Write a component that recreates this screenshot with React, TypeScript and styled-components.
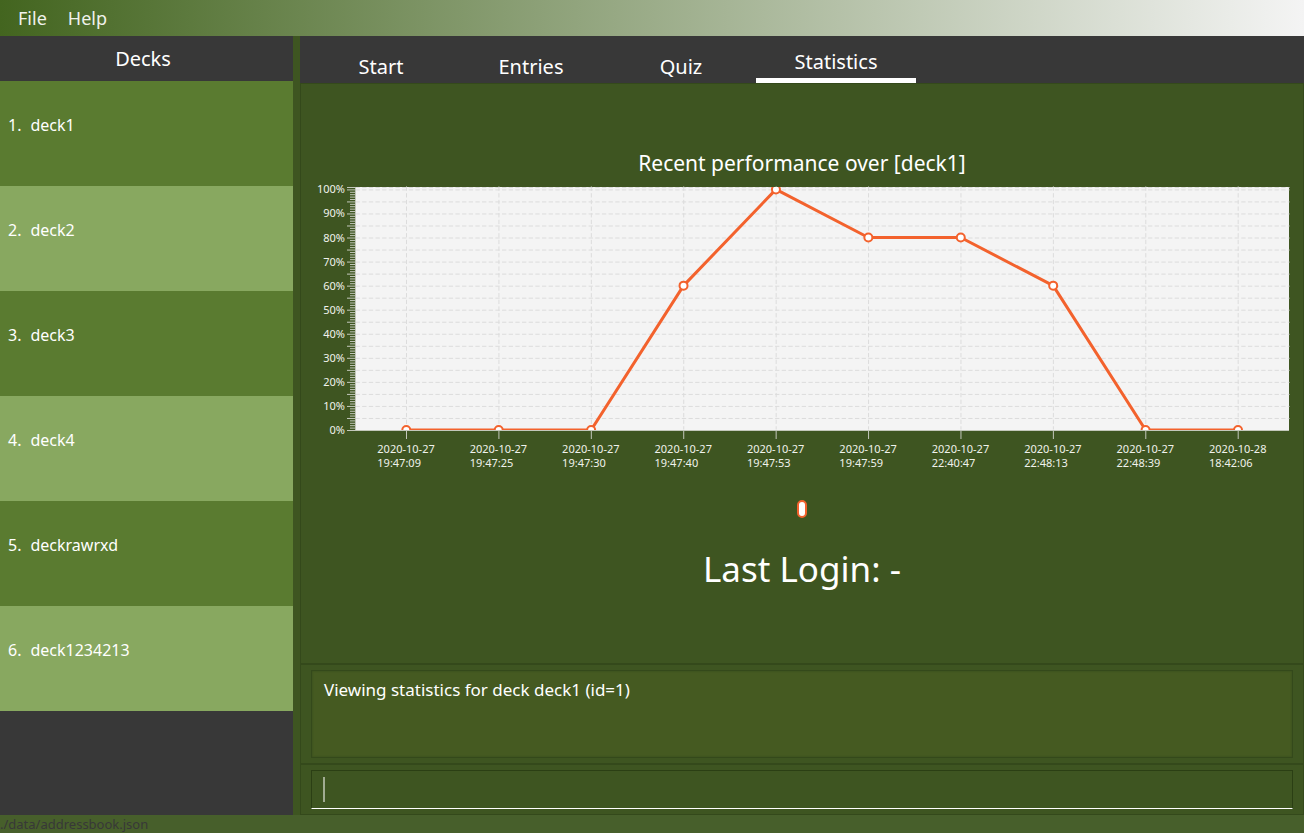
import React, { useLayoutEffect, useRef, useState } from "react";
import styled, { createGlobalStyle } from "styled-components";

const color = {
  base: "#3e5521",
  dark: "#383838",
  rowOdd: "#5a7b30",
  rowEven: "#88a860",
  edge: "#34491b",
  result: "#455a21",
  status: "#475f2b",
  line: "#f3622d",
};

const GlobalStyle = createGlobalStyle`
  *, *::before, *::after { box-sizing: border-box; }
  body {
    margin: 0;
    background: ${color.base};
    color: #fff;
    font-family: "Noto Sans", sans-serif;
  }
  button, input, textarea {
    font-family: inherit;
    color: inherit;
    background: none;
    border: 0;
    border-radius: 0;
    margin: 0;
    padding: 0;
    outline: none;
  }
`;

const Window = styled.div`
  display: flex;
  flex-direction: column;
  min-height: 100vh;
`;

const MenuBar = styled.nav`
  display: flex;
  gap: 21px;
  height: 36px;
  padding: 0 18px;
  background: linear-gradient(to right, #43651f, #f4f4f4);
`;

const MenuButton = styled.button`
  font-size: 18px;
  line-height: 36px;
  color: #f0f2ec;
`;

const Body = styled.div`
  display: flex;
  flex: 1;
  gap: 7px;
`;

const Sidebar = styled.aside`
  flex: 0 0 293px;
  background: ${color.dark};
`;

const SidebarTitle = styled.h2`
  margin: 0;
  padding-right: 7px;
  font-size: 20px;
  font-weight: 400;
  line-height: 45px;
  text-align: center;
`;

const DeckList = styled.ol`
  margin: 0;
  padding: 0;
  list-style: none;
`;

const DeckRow = styled.li<{ $even: boolean }>`
  display: flex;
  gap: 9px;
  height: 105px;
  padding: 32px 8px;
  font-size: 16px;
  line-height: 24px;
  background: ${(p) => (p.$even ? color.rowEven : color.rowOdd)};
`;

const Main = styled.main`
  display: flex;
  flex: 1;
  flex-direction: column;
  min-width: 0;
`;

const TabBar = styled.div`
  display: flex;
  align-items: flex-end;
  height: 47px;
  padding-left: 6px;
  background: ${color.dark};
`;

const Tab = styled.button<{ $active: boolean }>`
  width: ${(p) => (p.$active ? 160 : 150)}px;
  font-size: 20px;
  line-height: 32px;
  border-bottom: ${(p) => (p.$active ? "5px solid #fff" : "0")};
`;

const Pane = styled.section<{ $grow?: boolean }>`
  flex: ${(p) => (p.$grow ? "1 1 auto" : "0 0 auto")};
  padding: ${(p) => (p.$grow ? "0" : "5px 10px")};
  border: 1px solid ${color.edge};
`;

const StatsPane = styled(Pane)`
  display: flex;
  flex-direction: column;
  align-items: center;
  justify-content: center;
  padding-bottom: 6px;
`;

const ChartTitle = styled.h1`
  margin: 0 0 10px;
  font-size: 21px;
  font-weight: 400;
  line-height: 28px;
`;

const ChartBox = styled.div`
  width: 100%;
  height: 288px;

  svg {
    display: block;
    overflow: visible;
  }
`;

const LegendSymbol = styled.span`
  width: 10px;
  height: 18px;
  margin: 25px 0 27px;
  background: #fff;
  border: 2px solid ${color.line};
  border-radius: 5px;
`;

const LastLogin = styled.p`
  margin: 0;
  font-size: 35px;
  line-height: 48px;
`;

const ResultText = styled.textarea`
  display: block;
  width: 100%;
  height: 88px;
  padding: 7px 12px;
  font-size: 17px;
  line-height: 24px;
  resize: none;
  background: ${color.result};
  border: 1px solid ${color.edge};
  box-shadow: inset 0 0 2px ${color.edge};
`;

const CommandBox = styled.div`
  position: relative;
`;

const CommandInput = styled.input`
  display: block;
  width: 100%;
  height: 39px;
  padding: 0 12px;
  font-size: 17px;
  border: 1px solid #2b3f14;
  border-bottom-color: #fff;
`;

const Caret = styled.span`
  position: absolute;
  top: 7px;
  left: 12px;
  width: 2px;
  height: 25px;
  background: #a1ac92;
`;

const StatusBar = styled.footer`
  height: 18px;
  font-size: 13px;
  line-height: 18px;
  color: ${color.dark};
  background: ${color.status};
`;

const decks = ["deck1", "deck2", "deck3", "deck4", "deckrawrxd", "deck1234213"];
const tabs = ["Start", "Entries", "Quiz", "Statistics"];
const attempts = [
  { date: "2020-10-27", time: "19:47:09", score: 0 },
  { date: "2020-10-27", time: "19:47:25", score: 0 },
  { date: "2020-10-27", time: "19:47:30", score: 0 },
  { date: "2020-10-27", time: "19:47:40", score: 60 },
  { date: "2020-10-27", time: "19:47:53", score: 100 },
  { date: "2020-10-27", time: "19:47:59", score: 80 },
  { date: "2020-10-27", time: "22:40:47", score: 80 },
  { date: "2020-10-27", time: "22:48:13", score: 60 },
  { date: "2020-10-27", time: "22:48:39", score: 0 },
  { date: "2020-10-28", time: "18:42:06", score: 0 },
];

const PLOT_LEFT = 55;
const PLOT_HEIGHT = 243;
const Y_MAX = 101;

function PerformanceChart() {
  const box = useRef<HTMLDivElement>(null);
  const [width, setWidth] = useState(1002);

  useLayoutEffect(() => {
    const el = box.current;
    if (!el) return;
    const measure = () => setWidth(el.clientWidth);
    measure();
    const observer = new ResizeObserver(measure);
    observer.observe(el);
    return () => observer.disconnect();
  }, []);

  const right = width - 14;
  const first = PLOT_LEFT + 50.3;
  const step = (right - 51 - first) / (attempts.length - 1);
  const x = (i: number) => first + i * step;
  const y = (v: number) => PLOT_HEIGHT - (v * PLOT_HEIGHT) / Y_MAX;
  const percents = Array.from({ length: Y_MAX + 1 }, (_, v) => v);
  const gridRows = percents.filter((v) => (v % 5 === 0 && v > 0) || v === Y_MAX);

  return (
    <ChartBox ref={box}>
      <svg width={width} height={288} role="img" aria-label="Recent performance line chart">
        <defs>
          <clipPath id="plot">
            <rect x={PLOT_LEFT} y={0} width={right - PLOT_LEFT} height={PLOT_HEIGHT} />
          </clipPath>
        </defs>
        <rect x={PLOT_LEFT} y={0} width={right - PLOT_LEFT} height={PLOT_HEIGHT} fill="#f4f4f4" />
        <g stroke="#dcdcdc" strokeDasharray="3.33 3.33" strokeLinecap="square">
          {gridRows.map((v) => (
            <line key={v} x1={PLOT_LEFT} x2={right} y1={y(v) + 0.5} y2={y(v) + 0.5} />
          ))}
          {attempts.map((_, i) => (
            <line key={i} x1={x(i) + 0.2} x2={x(i) + 0.2} y1={0} y2={PLOT_HEIGHT - 1} />
          ))}
        </g>
        <g stroke="#c3c8bb">
          {percents.map((v) => (
            <line
              key={v}
              x1={v % 5 === 0 || v === Y_MAX ? 46 : 49}
              x2={PLOT_LEFT}
              y1={y(v) + 0.5}
              y2={y(v) + 0.5}
            />
          ))}
          <line x1={54.5} x2={54.5} y1={0} y2={PLOT_HEIGHT} />
          <line x1={PLOT_LEFT - 1} x2={right} y1={PLOT_HEIGHT + 0.5} y2={PLOT_HEIGHT + 0.5} />
          {attempts.map((_, i) => (
            <line
              key={i}
              x1={x(i) + 0.2}
              x2={x(i) + 0.2}
              y1={PLOT_HEIGHT + 1}
              y2={PLOT_HEIGHT + 9}
            />
          ))}
        </g>
        <g clipPath="url(#plot)" stroke={color.line}>
          <polyline
            fill="none"
            strokeWidth={3}
            strokeLinejoin="round"
            points={attempts.map((a, i) => `${x(i)},${y(a.score)}`).join(" ")}
          />
          {attempts.map((a, i) => (
            <circle key={i} cx={x(i)} cy={y(a.score)} r={4} fill="#fff" strokeWidth={2} />
          ))}
        </g>
        <g fill="#f0f2ec" fontSize={11}>
          {percents
            .filter((v) => v % 10 === 0)
            .map((v) => (
              <text key={v} x={44} y={y(v) + 4} textAnchor="end">
                {v}%
              </text>
            ))}
          {attempts.map((a, i) => (
            <text key={i} x={x(i) - 29} y={266}>
              {a.date}
              <tspan x={x(i) - 29} dy={14}>
                {a.time}
              </tspan>
            </text>
          ))}
        </g>
      </svg>
    </ChartBox>
  );
}

export default function App() {
  const [active, setActive] = useState("Statistics");
  const [command, setCommand] = useState("");

  return (
    <Window>
      <GlobalStyle />
      <MenuBar>
        <MenuButton type="button">File</MenuButton>
        <MenuButton type="button">Help</MenuButton>
      </MenuBar>
      <Body>
        <Sidebar>
          <SidebarTitle>Decks</SidebarTitle>
          <DeckList>
            {decks.map((name, i) => (
              <DeckRow key={name} $even={i % 2 === 1}>
                <span>{i + 1}.</span>
                <span>{name}</span>
              </DeckRow>
            ))}
          </DeckList>
        </Sidebar>
        <Main>
          <TabBar role="tablist">
            {tabs.map((name) => (
              <Tab
                key={name}
                type="button"
                role="tab"
                aria-selected={name === active}
                $active={name === active}
                onClick={() => setActive(name)}
              >
                {name}
              </Tab>
            ))}
          </TabBar>
          <StatsPane $grow>
            <ChartTitle>Recent performance over [deck1]</ChartTitle>
            <PerformanceChart />
            <LegendSymbol />
            <LastLogin>Last Login: -</LastLogin>
          </StatsPane>
          <Pane>
            <ResultText
              readOnly
              aria-label="Result"
              value="Viewing statistics for deck deck1 (id=1)"
            />
          </Pane>
          <Pane>
            <CommandBox>
              <CommandInput
                aria-label="Command"
                value={command}
                onChange={(e) => setCommand(e.target.value)}
              />
              {command === "" && <Caret />}
            </CommandBox>
          </Pane>
        </Main>
      </Body>
      <StatusBar>./data/addressbook.json</StatusBar>
    </Window>
  );
}
